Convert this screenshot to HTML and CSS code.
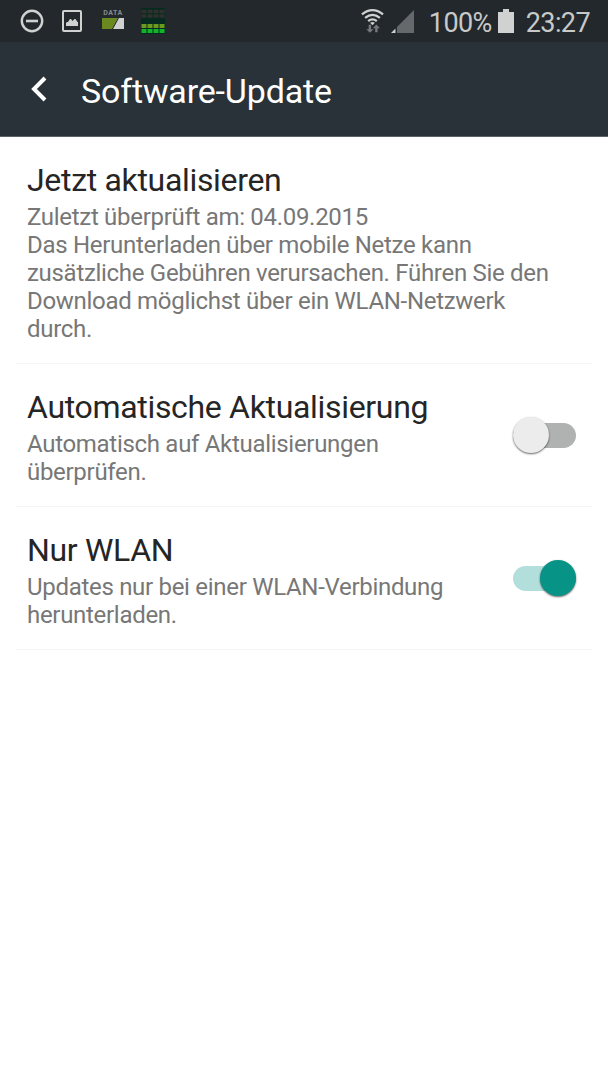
FILE: index.html
```html
<!DOCTYPE html>
<html lang="de">
<head>
    <meta charset="UTF-8">
    <title>Software-Update</title>
    <link rel="stylesheet" href="styles.css">
</head>
<body>
<div class="status-bar">
    <div class="notifications">
        <svg class="icon-dnd" width="24" height="24" viewBox="0 0 24 24">
            <circle cx="12" cy="12" r="10.2" fill="none" stroke="#d0d1d1" stroke-width="2.400"/>
            <path d="M6 12h12" stroke="#d0d1d1" stroke-width="2.6"/>
        </svg>
        <svg class="icon-image" width="20" height="22" viewBox="0 0 20 22">
            <rect x="1" y="1" width="18" height="20" rx="1" fill="none" stroke="#d0d1d1" stroke-width="2"/>
            <path d="M4 16v-3l1-1h1l2-3h1l1.500 2 2-2h1l2 3h.500v4z" fill="#d0d1d1"/>
        </svg>
        <div class="data">
            <span>DATA</span>
            <svg width="22" height="11" viewBox="0 0 22 11">
                <path d="M0 0h16l-6 11H0z" fill="#6a8a20"/>
                <path d="M17 0h5v11H11z" fill="#d0d1d1"/>
            </svg>
        </div>
        <svg class="icon-grid" width="24" height="26" viewBox="0 0 24 26">
            <rect width="24" height="26" rx="1" fill="#062a20"/>
            <path d="M.5 3.500h23M.5 8h23" stroke="#30302c" stroke-width="3.400" stroke-dasharray="5 1"/>
            <path d="M.5 18h23" stroke="#6c9a1c" stroke-width="4" stroke-dasharray="5 1"/>
            <path d="M.5 23h23" stroke="#12b52a" stroke-width="4" stroke-dasharray="5 1"/>
        </svg>
    </div>
    <div class="system">
        <svg class="icon-wifi" width="23" height="25" viewBox="0 0 24 26">
            <g fill="none" stroke="#d0d1d1" stroke-width="2.400">
                <path d="M1 5.500q11-8.600 22 0"/>
                <path d="M4.300 9.200q7.700-6.200 15.400 0"/>
                <path d="M7.500 12.600q4.500-3.600 9 0"/>
            </g>
            <path d="M9.500 14.400q2.500-1.600 5 0L12 17z" fill="#d0d1d1"/>
            <path d="M8 16.500h2.500V21H13l-3.700 3.800L5.500 21H8zM14.800 24.300h2.500V20h2.500L16 16.200 12.300 20h2.500z" fill="#777a7c"/>
        </svg>
        <svg class="icon-signal" width="23" height="23" viewBox="0 0 23 23">
            <path d="M6 23V17L23 0v23z" fill="#65696b"/>
            <path d="M0 23l4.500-4.500V23z" fill="#d0d1d1"/>
        </svg>
        <span class="percent">100%</span>
        <svg class="icon-battery" width="16" height="24" viewBox="0 0 16 24">
            <path d="M0 3h5V0h6v3h5v21H0z" fill="#d0d1d1"/>
        </svg>
        <span class="clock">23:27</span>
    </div>
</div>

<header class="title-bar">
    <svg class="back" width="16" height="26" viewBox="0 0 16 26">
        <path d="M14 2L3 13l11 11" fill="none" stroke="#fff" stroke-width="4"/>
    </svg>
    <h1>Software-Update</h1>
</header>

<main class="settings">
    <section class="item">
        <div class="text">
            <h2>Jetzt aktualisieren</h2>
            <p>Zuletzt überprüft am: 04.09.2015<br>
            Das Herunterladen über mobile Netze kann<br>
            zusätzliche Gebühren verursachen. Führen Sie den<br>
            Download möglichst über ein WLAN-Netzwerk<br>
            durch.</p>
        </div>
    </section>
    <section class="item">
        <div class="text">
            <h2>Automatische Aktualisierung</h2>
            <p>Automatisch auf Aktualisierungen<br>überprüfen.</p>
        </div>
        <div class="switch"><div class="thumb"></div></div>
    </section>
    <section class="item">
        <div class="text">
            <h2>Nur WLAN</h2>
            <p>Updates nur bei einer WLAN-Verbindung<br>herunterladen.</p>
        </div>
        <div class="switch on"><div class="thumb"></div></div>
    </section>
</main>
</body>
</html>
```
FILE: styles.css
```css
body {
  margin: 0;
  background: #fff;
  color: #252525;
  font-family: Roboto, sans-serif;
}

svg {
  display: block;
  flex: none;
}

h1, h2, p {
  margin: 0;
  font-weight: 400;
  white-space: nowrap;
}

/* status bar */
.status-bar {
  display: flex;
  justify-content: space-between;
  box-sizing: border-box;
  height: 42px;
  padding: 0 18px 0 20px;
  background: #22282c;
  color: #c8c9c9;
}

.notifications, .system {
  display: flex;
  align-items: center;
}

.icon-image {
  margin-left: 18px;
}

.data {
  display: flex;
  flex-direction: column;
  align-items: center;
  width: 22px;
  margin: 0 17px 4px 20px;
}

.data span {
  margin-bottom: 1px;
  font-size: 7px;
  font-weight: 700;
  line-height: 7px;
  letter-spacing: 0.5px;
  color: #8a8d8e;
}

.system {
  font-size: 27px;
}

.percent, .clock {
  margin-top: 3px;
  letter-spacing: -0.6px;
}

.icon-signal {
  margin: 0 15px 0 7px;
}

.icon-battery {
  margin: 0 12px 0 6px;
}

/* title bar */
.title-bar {
  display: flex;
  align-items: center;
  box-sizing: border-box;
  height: 95px;
  padding: 3px 0 0 31px;
  background: #283238;
  border-bottom: 1px solid #5b6367;
  color: #fff;
}

.back {
  margin-bottom: 3px;
}

.title-bar h1 {
  margin-left: 34px;
  font-size: 34px;
  letter-spacing: -0.15px;
}

/* settings list */
.settings {
  padding: 0 16px;
}

.item {
  display: flex;
  justify-content: space-between;
  align-items: center;
  padding: 24px 16px 20px 11px;
  border-bottom: 1px solid #f5f5f5;
}

.item h2 {
  font-size: 32px;
  line-height: 38px;
  letter-spacing: -0.32px;
  margin-bottom: 4px;
}

.item p {
  font-size: 24px;
  line-height: 28px;
  letter-spacing: -0.3px;
  color: #777;
}

.switch {
  display: flex;
  align-items: center;
  width: 63px;
  height: 25px;
  margin-bottom: 4px;
  border-radius: 13px;
  background: #b0b2b1;
}

.thumb {
  width: 36px;
  height: 36px;
  flex: none;
  border-radius: 50%;
  background: #ececec;
  box-shadow: 0 1px 2px rgba(0, 0, 0, 0.6);
}

.switch.on {
  justify-content: flex-end;
  background: #b2dfdb;
}

.switch.on .thumb {
  background: #079486;
}
```
